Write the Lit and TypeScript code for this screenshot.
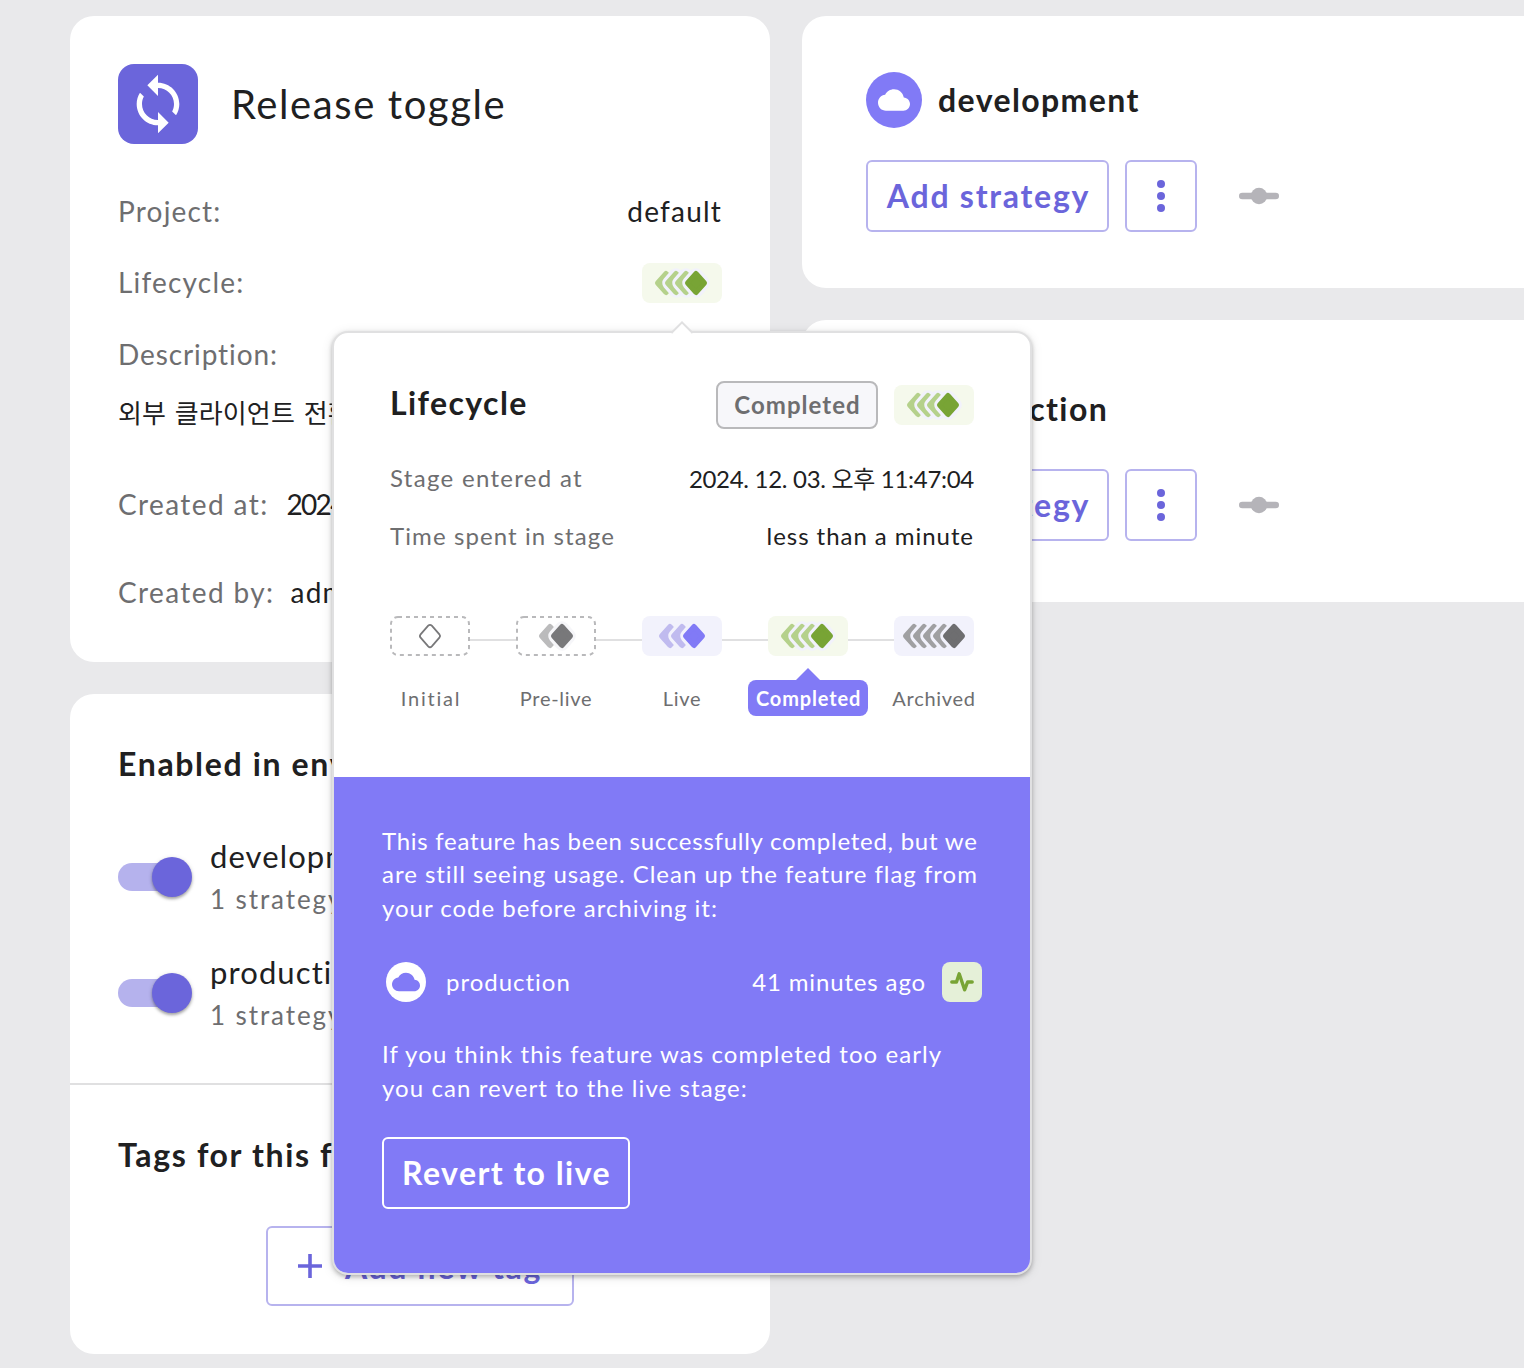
import { LitElement, html, css, svg, nothing } from "lit";
import { customElement, property, state } from "lit/decorators.js";
import { classMap } from "lit/directives/class-map.js";

type Stage = "initial" | "pre-live" | "live" | "completed" | "archived";

// centres of the diamonds inside the 80x40 badge, the last one is the solid one
const STAGE_DIAMONDS: Record<Stage, number[]> = {
  initial: [40],
  "pre-live": [34, 46],
  live: [28, 40, 52],
  completed: [24, 34, 44, 54],
  archived: [20, 30, 40, 50, 60],
};

const CLOUD =
  "M19.35 10.04C18.67 6.59 15.64 4 12 4 9.11 4 6.6 5.64 5.35 8.04 2.34 8.36 0 10.91 0 14c0 3.31 2.69 6 6 6h13c2.76 0 5-2.24 5-5 0-2.64-2.05-4.78-4.65-4.96z";
const LOOP =
  "M12 4V1L8 5l4 4V6c3.31 0 6 2.69 6 6 0 1.01-.25 1.97-.7 2.8l1.46 1.46C19.54 15.03 20 13.57 20 12c0-4.42-3.58-8-8-8zm0 14c-3.31 0-6-2.69-6-6 0-1.01.25-1.97.7-2.8L5.24 7.74C4.46 8.97 4 10.43 4 12c0 4.42 3.58 8 8 8v3l4-4-4-4v3z";

const diamond = (cx: number, w: number, h: number) =>
  `${cx - w},20 ${cx},${20 - h} ${cx + w},20 ${cx},${20 + h}`;

@customElement("stage-badge")
export class StageBadge extends LitElement {
  static styles = css`
    :host {
      display: block;
      flex: none;
      width: 80px;
      height: 40px;
    }
    svg {
      display: block;
    }
    .box {
      fill: #f2f2fc;
    }
    .halo {
      fill: #f2f2fc;
      stroke: #f2f2fc;
      stroke-width: 13.5;
      stroke-linejoin: round;
    }
    .trail,
    .head {
      stroke-width: 5;
      stroke-linejoin: round;
    }
    .outline {
      fill: none;
      stroke: #78787a;
      stroke-width: 1.8;
    }
    .initial .box,
    .pre-live .box {
      fill: #fff;
      stroke: #b9b9bb;
      stroke-width: 2;
      stroke-dasharray: 4 4;
    }
    .pre-live .halo {
      fill: #f6f6f9;
      stroke: #f6f6f9;
    }
    .pre-live .trail {
      fill: #bbbbbc;
      stroke: #bbbbbc;
    }
    .pre-live .head {
      fill: #78787a;
      stroke: #78787a;
    }
    .live .trail {
      fill: #c0bbef;
      stroke: #c0bbef;
    }
    .live .head {
      fill: #817af6;
      stroke: #817af6;
    }
    .completed .box {
      fill: #f5f9ec;
    }
    .completed .trail {
      fill: #b5d18b;
      stroke: #b5d18b;
    }
    .completed .head {
      fill: #78a435;
      stroke: #78a435;
    }
    .archived .trail {
      fill: #a0a0a2;
      stroke: #a0a0a2;
    }
    .archived .head {
      fill: #6e6e70;
      stroke: #6e6e70;
    }
  `;

  @property() declare stage: Stage;

  render() {
    const centres = STAGE_DIAMONDS[this.stage];
    const dashed = this.stage === "initial" || this.stage === "pre-live";
    return html`
      <svg class=${this.stage} width="80" height="40" viewBox="0 0 80 40">
        ${dashed
          ? svg`<rect class="box" x="1" y="1" width="78" height="38" rx="7" />`
          : svg`<rect class="box" width="80" height="40" rx="8" />`}
        ${this.stage === "initial"
          ? svg`<path class="outline" d="M38.2 9.7q1.8-1.8 3.6 0l7.6 8.6q1.4 1.7 0 3.4l-7.6 8.6q-1.8 1.8-3.6 0l-7.6-8.6q-1.4-1.7 0-3.4z" />`
          : centres.map(
              (cx, i) => svg`
                ${i > 0 ? svg`<polygon class="halo" points=${diamond(cx, 7, 8)} />` : nothing}
                <polygon
                  class=${i === centres.length - 1 ? "head" : "trail"}
                  points=${diamond(cx, 8.5, 9.5)}
                />
              `
            )}
      </svg>
    `;
  }
}

@customElement("env-card")
export class EnvCard extends LitElement {
  static styles = css`
    :host {
      display: block;
      box-sizing: border-box;
      padding: 56px 64px;
      background: #fff;
      border-radius: 24px 0 0 24px;
    }
    svg {
      display: block;
    }
    .header {
      display: flex;
      align-items: center;
      gap: 16px;
      height: 56px;
      margin-bottom: 32px;
    }
    .icon {
      display: grid;
      place-items: center;
      width: 56px;
      height: 56px;
      border-radius: 50%;
      background: #817af6;
      fill: #fff;
    }
    .name {
      padding-bottom: 1px;
      font-size: 32px;
      font-weight: 700;
      letter-spacing: 1.4px;
      color: #202021;
    }
    .actions {
      display: flex;
      align-items: center;
      gap: 16px;
    }
    .button {
      box-sizing: border-box;
      display: grid;
      place-items: center;
      width: 243px;
      height: 72px;
      padding: 0 0 1px 2px;
      border: 2px solid #b7b3ee;
      border-radius: 6px;
      font-size: 32px;
      font-weight: 700;
      letter-spacing: 1.75px;
      color: #6b65db;
    }
    .menu {
      width: 72px;
      padding: 0;
      fill: #6b65db;
    }
    .usage {
      margin-left: 26px;
      fill: #b5b4b9;
    }
  `;

  @property() declare name: string;

  render() {
    return html`
      <div class="header">
        <div class="icon">
          <svg width="32" height="32" viewBox="0 0 24 24"><path d=${CLOUD} /></svg>
        </div>
        <span class="name">${this.name}</span>
      </div>
      <div class="actions">
        <div class="button">Add strategy</div>
        <div class="button menu">
          <svg width="48" height="48" viewBox="0 0 48 48">
            <circle cx="24" cy="12" r="4" />
            <circle cx="24" cy="24" r="4" />
            <circle cx="24" cy="36" r="4" />
          </svg>
        </div>
        <svg class="usage" width="40" height="20" viewBox="0 0 40 20">
          <rect y="6.7" width="40" height="6.6" rx="3.3" />
          <circle cx="20" cy="10" r="8.2" />
        </svg>
      </div>
    `;
  }
}

@customElement("lifecycle-popover")
export class LifecyclePopover extends LitElement {
  static styles = css`
    :host {
      display: block;
      box-sizing: border-box;
      width: 700px;
      height: 944px;
      border: 2px solid #e0e0e1;
      border-radius: 16px;
      background: #fff;
      box-shadow: 0 2px 4px rgba(0, 0, 0, 0.26), 0 2px 12px rgba(0, 0, 0, 0.1);
    }
    svg {
      display: block;
    }
    .arrow {
      position: absolute;
      top: -12px;
      left: 336px;
    }
    .summary {
      box-sizing: border-box;
      height: 444px;
      padding: 48px 56px 0;
    }
    .title-row {
      display: flex;
      align-items: center;
      gap: 16px;
      height: 48px;
      margin-bottom: 18px;
    }
    .title {
      flex: 1;
      padding-bottom: 6px;
      font-size: 32px;
      font-weight: 700;
      letter-spacing: 1.4px;
    }
    .chip {
      box-sizing: border-box;
      display: grid;
      place-items: center;
      width: 162px;
      height: 48px;
      padding: 0 0 1px 1px;
      border: 2px solid #b9b9bb;
      border-radius: 8px;
      background: #f7f7fa;
      font-size: 24px;
      font-weight: 700;
      letter-spacing: 1.05px;
      color: #6e6e70;
    }
    .fact {
      display: flex;
      align-items: center;
      justify-content: space-between;
      height: 58px;
      padding-top: 2px;
      box-sizing: border-box;
      font-size: 24px;
      letter-spacing: 0.95px;
    }
    .fact .label {
      letter-spacing: 1.3px;
      color: #6e6e70;
    }
    .fact .spent {
      letter-spacing: 1.1px;
    }
    .fact .date {
      letter-spacing: -0.3px;
    }
    .timeline {
      display: flex;
      justify-content: space-between;
      margin-top: 53px;
    }
    .line {
      flex: 1;
      height: 2px;
      margin-top: 23px;
      background: #e0e0e1;
    }
    .step {
      display: flex;
      flex-direction: column;
      align-items: center;
      width: 80px;
    }
    .step-label {
      position: relative;
      display: grid;
      place-items: center;
      height: 35px;
      margin-top: 24px;
      padding: 0 8px 1px;
      border-radius: 8px;
      font-size: 20px;
      letter-spacing: 0.7px;
      white-space: nowrap;
      color: #6e6e70;
    }
    .initial {
      padding-left: 10px;
      letter-spacing: 1.8px;
    }
    .current {
      width: 104px;
      background: #817af6;
      font-weight: 700;
      letter-spacing: 0.85px;
      color: #fff;
    }
    .current::before {
      content: "";
      position: absolute;
      top: -12px;
      left: 48px;
      border: 12px solid transparent;
      border-top: 0;
      border-bottom-color: #817af6;
    }
    .advice {
      box-sizing: border-box;
      height: 496px;
      padding: 47px 48px 0;
      border-radius: 0 0 14px 14px;
      background: #817af6;
      font-size: 24px;
      line-height: 33.4px;
      letter-spacing: 0.98px;
      color: #fff;
      white-space: nowrap;
    }
    p {
      margin: 0;
    }
    .lead {
      letter-spacing: 0.74px;
    }
    .revert-hint {
      letter-spacing: 1.08px;
    }
    .env {
      display: flex;
      align-items: center;
      height: 40px;
      margin: 38px 0 35px 4px;
    }
    .env-icon {
      display: grid;
      place-items: center;
      width: 40px;
      height: 40px;
      margin-right: 20px;
      border-radius: 50%;
      background: #fff;
      fill: #817af6;
    }
    .env-name {
      flex: 1;
      padding-bottom: 2px;
    }
    .seen {
      padding-bottom: 2px;
      letter-spacing: 0.86px;
    }
    .pulse {
      display: grid;
      place-items: center;
      width: 40px;
      height: 40px;
      margin-left: 16px;
      border-radius: 8px;
      background: #e5f0d8;
    }
    .revert {
      box-sizing: border-box;
      display: grid;
      place-items: center;
      width: 248px;
      height: 72px;
      margin-top: 33px;
      padding: 0 0 1px 1px;
      border: 2px solid #fff;
      border-radius: 6px;
      font-size: 32px;
      font-weight: 700;
      letter-spacing: 1.45px;
    }
  `;

  @state()
  private declare steps: Array<{ stage: Stage; label: string }>;

  constructor() {
    super();
    this.steps = [
      { stage: "initial", label: "Initial" },
      { stage: "pre-live", label: "Pre-live" },
      { stage: "live", label: "Live" },
      { stage: "completed", label: "Completed" },
      { stage: "archived", label: "Archived" },
    ];
  }

  render() {
    return html`
      <svg class="arrow" width="24" height="14" viewBox="0 0 24 14">
        <path d="M2 12L12 2L22 12V12.6H2z" fill="#fff" />
        <path d="M1.4 12L12 1.4L22.6 12" fill="none" stroke="#e0e0e1" stroke-width="2" />
      </svg>
      <div class="summary">
        <div class="title-row">
          <span class="title">Lifecycle</span>
          <span class="chip">Completed</span>
          <stage-badge stage="completed"></stage-badge>
        </div>
        <div class="fact">
          <span class="label">Stage entered at</span>
          <span class="date">2024. 12. 03. 오후 11:47:04</span>
        </div>
        <div class="fact">
          <span class="label spent">Time spent in stage</span>
          <span>less than a minute</span>
        </div>
        <div class="timeline">
          ${this.steps.map(
            (s, i) => html`
              ${i > 0 ? html`<div class="line"></div>` : nothing}
              <div class="step">
                <stage-badge stage=${s.stage}></stage-badge>
                <span
                  class=${classMap({
                    "step-label": true,
                    initial: s.stage === "initial",
                    current: s.stage === "completed",
                  })}
                  >${s.label}</span
                >
              </div>
            `
          )}
        </div>
      </div>
      <div class="advice">
        <p>
          <span class="lead">This feature has been successfully completed, but we</span><br />are
          still seeing usage. Clean up the feature flag from<br />your code before archiving it:
        </p>
        <div class="env">
          <div class="env-icon">
            <svg width="28" height="28" viewBox="0 0 24 24"><path d=${CLOUD} /></svg>
          </div>
          <span class="env-name">production</span>
          <span class="seen">41 minutes ago</span>
          <div class="pulse">
            <svg width="24" height="22" viewBox="0 0 24 22">
              <path
                d="M1.8 11H6.5L9.2 2.8L14.6 18.8L17.6 11H22.2"
                fill="none"
                stroke="#78a435"
                stroke-width="3.4"
                stroke-linecap="round"
                stroke-linejoin="round"
              />
            </svg>
          </div>
        </div>
        <p class="revert-hint">
          If you think this feature was completed too early<br />you can revert to the live stage:
        </p>
        <div class="revert">Revert to live</div>
      </div>
    `;
  }
}

@customElement("app-root")
export class AppRoot extends LitElement {
  static styles = css`
    :host {
      display: block;
      position: relative;
      box-sizing: border-box;
      width: 1524px;
      height: 1368px;
      overflow: hidden;
      background: #e9e9eb;
      font-family: Lato, "Noto Sans CJK KR", sans-serif;
      color: #202021;
      white-space: nowrap;
    }
    svg {
      display: block;
    }
    .page {
      display: flex;
      gap: 32px;
      padding: 16px 0 0 70px;
    }
    .side {
      display: flex;
      flex-direction: column;
      gap: 32px;
      width: 700px;
    }
    .envs {
      display: flex;
      flex: 1;
      flex-direction: column;
      gap: 32px;
    }
    .tall {
      padding-top: 61px;
      padding-bottom: 61px;
    }
    .card {
      border-radius: 24px;
      background: #fff;
    }
    .details {
      box-sizing: border-box;
      height: 646px;
      padding: 48px 48px 0;
      font-size: 28px;
      letter-spacing: 1.2px;
    }
    .type {
      display: flex;
      align-items: center;
      gap: 33px;
      margin-bottom: 32px;
    }
    .type-icon {
      display: grid;
      place-items: center;
      width: 80px;
      height: 80px;
      border-radius: 16px;
      background: #6b65db;
      fill: #fff;
    }
    .type-name {
      padding-bottom: 1px;
      font-size: 40px;
      letter-spacing: 1.6px;
    }
    .row {
      display: flex;
      align-items: center;
      justify-content: space-between;
      height: 72px;
    }
    .row:nth-child(2) {
      height: 71px;
    }
    .row span {
      padding-bottom: 2px;
    }
    .label {
      color: #6e6e70;
    }
    .row .long {
      letter-spacing: 0.9px;
    }
    .description {
      height: 44px;
      margin-bottom: 24px;
      font-size: 26px;
      line-height: 44px;
      letter-spacing: 0.1px;
      word-spacing: 2px;
    }
    .created {
      display: flex;
      align-items: center;
      gap: 16px;
      height: 88px;
      padding-top: 2px;
      box-sizing: border-box;
    }
    .created .label {
      letter-spacing: 1.4px;
    }
    .created .digits {
      margin-left: 2px;
      letter-spacing: -1.7px;
    }
    .section {
      padding: 48px;
    }
    .section + .section {
      border-top: 2px solid #e0e0e1;
    }
    .toggles {
      padding-bottom: 47px;
    }
    .heading {
      height: 41px;
      font-size: 32px;
      font-weight: 700;
      line-height: 43px;
      letter-spacing: 1.65px;
    }
    .toggle {
      display: flex;
      align-items: center;
      gap: 18px;
      height: 87px;
      margin-top: 29px;
    }
    .heading + .toggle {
      margin-top: 50px;
    }
    .switch {
      display: flex;
      align-items: center;
      justify-content: flex-end;
      width: 74px;
      height: 28px;
      border-radius: 14px;
      background: linear-gradient(90deg, #b5b2ed 60px, transparent 60px);
    }
    .thumb {
      width: 40px;
      height: 40px;
      border-radius: 50%;
      background: #6b65db;
      box-shadow: 0 2px 3px rgba(0, 0, 0, 0.3), 0 1px 5px rgba(0, 0, 0, 0.12);
    }
    .text {
      padding-top: 3px;
    }
    .env-name {
      font-size: 31px;
      line-height: 43px;
      letter-spacing: 1.1px;
    }
    .strategies {
      font-size: 26px;
      line-height: 43px;
      letter-spacing: 1.9px;
      color: #6e6e70;
    }
    .add-tag {
      box-sizing: border-box;
      display: flex;
      align-items: center;
      gap: 23px;
      width: 308px;
      height: 80px;
      margin: 52px auto 0;
      padding-left: 30px;
      border: 2px solid #b7b3ee;
      border-radius: 6px;
      font-size: 32px;
      font-weight: 700;
      letter-spacing: 1.66px;
      color: #6b65db;
    }
    lifecycle-popover {
      position: absolute;
      top: 331px;
      left: 332px;
    }
  `;

  render() {
    return html`
      <div class="page">
        <div class="side">
          <div class="card details">
            <div class="type">
              <div class="type-icon">
                <svg width="64" height="64" viewBox="0 0 24 24"><path d=${LOOP} /></svg>
              </div>
              <span class="type-name">Release toggle</span>
            </div>
            <div class="row"><span class="label">Project:</span><span>default</span></div>
            <div class="row">
              <span class="label">Lifecycle:</span>
              <stage-badge stage="completed"></stage-badge>
            </div>
            <div class="row"><span class="label long">Description:</span></div>
            <div class="description">외부 클라이언트 전환</div>
            <div class="created">
              <span class="label">Created at:</span><span class="digits">2024</span>
            </div>
            <div class="created"><span class="label">Created by:</span><span>admin</span></div>
          </div>
          <div class="card">
            <div class="section toggles">
              <div class="heading">Enabled in environments</div>
              ${["development", "production"].map(
                (name) => html`
                  <div class="toggle">
                    <div class="switch"><div class="thumb"></div></div>
                    <div class="text">
                      <div class="env-name">${name}</div>
                      <div class="strategies">1 strategy</div>
                    </div>
                  </div>
                `
              )}
            </div>
            <div class="section">
              <div class="heading">Tags for this feature</div>
              <div class="add-tag">
                <svg width="24" height="24" viewBox="0 0 24 24">
                  <path d="M12 0v24M0 12h24" fill="none" stroke="#6b65db" stroke-width="3.6" />
                </svg>
                <span>Add new tag</span>
              </div>
            </div>
          </div>
        </div>
        <div class="envs">
          <env-card name="development"></env-card>
          <env-card class="tall" name="production"></env-card>
        </div>
      </div>
      <lifecycle-popover></lifecycle-popover>
    `;
  }
}

declare global {
  interface HTMLElementTagNameMap {
    "app-root": AppRoot;
    "env-card": EnvCard;
    "lifecycle-popover": LifecyclePopover;
    "stage-badge": StageBadge;
  }
}
